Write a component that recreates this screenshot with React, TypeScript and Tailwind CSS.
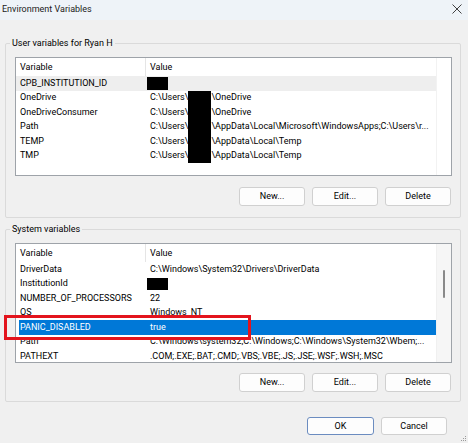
import React from 'react';
import clsx from 'clsx';

type Row = {
  name: string;
  value: React.ReactNode;
  hover?: boolean;
  selected?: boolean;
};

// redaction blocks from the screenshot
function Blot({ className }: { className?: string }) {
  return <span className={clsx('inline-block bg-black', className)} />;
}

function UserPath({ rest }: { rest: string }) {
  return (
    <>
      <span>C:\Users\</span>
      <Blot className="h-full w-[23px]" />
      <span>{rest}</span>
    </>
  );
}

const userRows: Row[] = [
  { name: 'CPB_INSTITUTION_ID', value: <Blot className="-ml-[3px] h-[13px] w-[21px]" />, hover: true },
  { name: 'OneDrive', value: <UserPath rest="\OneDrive" /> },
  { name: 'OneDriveConsumer', value: <UserPath rest="\OneDrive" /> },
  { name: 'Path', value: <UserPath rest="\AppData\Local\Microsoft\WindowsApps;C:\Users\r..." /> },
  { name: 'TEMP', value: <UserPath rest="\AppData\Local\Temp" /> },
  { name: 'TMP', value: <UserPath rest="\AppData\Local\Temp" /> },
];

const systemRows: Row[] = [
  { name: 'DriverData', value: 'C:\\Windows\\System32\\Drivers\\DriverData' },
  { name: 'InstitutionId', value: <Blot className="-ml-[3px] h-[12px] w-[21px]" /> },
  { name: 'NUMBER_OF_PROCESSORS', value: '22' },
  { name: 'OS', value: 'Windows_NT' },
  { name: 'PANIC_DISABLED', value: 'true', selected: true },
  { name: 'Path', value: 'C:\\Windows\\system32;C:\\Windows;C:\\Windows\\System32\\Wbem;...' },
  { name: 'PATHEXT', value: '.COM;.EXE;.BAT;.CMD;.VBS;.VBE;.JS;.JSE;.WSF;.WSH;.MSC' },
];

function ListRow({ row }: { row: Row }) {
  return (
    <div
      className={clsx(
        'flex h-[14.5px] shrink-0 whitespace-nowrap',
        row.selected && 'ml-[3px] bg-[#0078d7] text-white',
        row.hover && 'bg-[#eeeeee]'
      )}
    >
      <div className={clsx('flex shrink-0 items-center', row.selected ? 'w-[127px] pl-[1px]' : 'w-[130px] pl-[4px]')}>
        {row.name}
      </div>
      <div className="flex h-full flex-1 items-center overflow-hidden pl-[4px]">{row.value}</div>
    </div>
  );
}

function ListView({ rows, height, scroll }: { rows: Row[]; height: string; scroll?: boolean }) {
  return (
    <div className={clsx('flex overflow-hidden border border-[#9ea3a9] bg-white', height)}>
      <div className="flex w-[420px] flex-col overflow-hidden">
        <div className="flex h-[18px] shrink-0 items-center">
          <div className="flex h-full w-[130px] items-center border-r border-[#e5e5e5] pl-[4px]">Variable</div>
          <div className="pl-[4px]">Value</div>
        </div>
        {rows.map((r) => (
          <ListRow key={r.name} row={r} />
        ))}
      </div>
      <div
        className={clsx(
          'flex flex-1 justify-center border-l',
          scroll ? 'border-[#f0f0f0] bg-[#f6f6f6] pt-[26px]' : 'border-[#f2f2f2] bg-white'
        )}
      >
        {scroll && <div className="h-[28px] w-[2px] rounded-full bg-[#8a8a8a]" />}
      </div>
    </div>
  );
}

function Button({ children, className }: { children: React.ReactNode; className?: string }) {
  return (
    <div
      className={clsx(
        'flex w-[66px] items-center justify-center rounded-[3px] border bg-[#fdfdfd]',
        className ?? 'border-[#d0d0d0]'
      )}
    >
      {children}
    </div>
  );
}

function GroupBox({
  label,
  className,
  children,
}: {
  label: string;
  className?: string;
  children: React.ReactNode;
}) {
  return (
    <div className={clsx('relative flex flex-col rounded-[2px] border border-[#dadada] pl-[9px] pr-[8px] pt-[13px]', className)}>
      <span className="absolute left-[4px] top-[-7px] bg-[#f0f0f0] px-[2px] leading-[12px]">{label}</span>
      {children}
    </div>
  );
}

function ButtonRow({ className }: { className?: string }) {
  return (
    <div className={clsx('flex h-[19px] justify-end gap-[7px] pr-[1px]', className)}>
      <Button>New...</Button>
      <Button>Edit...</Button>
      <Button>Delete</Button>
    </div>
  );
}

export default function App() {
  return (
    <div className="relative flex h-[443px] w-[468px] flex-col overflow-hidden bg-[#f0f0f0] font-[family-name:Roboto,sans-serif] text-[9px] leading-none text-black">
      {/* title bar */}
      <div className="flex h-[20px] shrink-0 items-center justify-between bg-[#eef3f8] pb-[1px] pl-[2px] pr-[6px]">
        <span className="text-[#1b1b1b]">Environment Variables</span>
        <svg width="10" height="10" viewBox="0 0 10 10" className="mb-[2px]">
          <path d="M0.5 0.5 L9.5 9.5 M9.5 0.5 L0.5 9.5" stroke="#2b2b2b" strokeWidth="0.9" fill="none" />
        </svg>
      </div>

      <div className="flex flex-col pl-[5px] pr-[7px]">
        <GroupBox label="User variables for Ryan H" className="mt-[23px] pb-[11px]">
          <ListView rows={userRows} height="h-[119px]" />
          <ButtonRow className="mt-[11px]" />
        </GroupBox>

        <GroupBox label="System variables" className="mt-[11px] pb-[9px]">
          <ListView rows={systemRows} height="h-[120px]" scroll />
          <ButtonRow className="mt-[10px]" />
        </GroupBox>

        <div className="mt-[15px] flex h-[18px] justify-end gap-[7px] pr-[14px]">
          <Button className="w-[67px] border-[#6b8cc0]">OK</Button>
          <Button>Cancel</Button>
        </div>
      </div>

      {/* annotation around the selected row */}
      <div className="absolute left-[4px] top-[315px] h-[25px] w-[247px] border-[3px] border-[#e3141d]" />

      {/* size grip */}
      <svg width="6" height="6" viewBox="0 0 6 6" className="absolute bottom-[1px] right-[1px]">
        <rect x="4" y="0" width="1" height="1" fill="#9a9a9a" />
        <rect x="2" y="2" width="1" height="1" fill="#9a9a9a" />
        <rect x="4" y="2" width="1" height="1" fill="#9a9a9a" />
        <rect x="0" y="4" width="1" height="1" fill="#9a9a9a" />
        <rect x="2" y="4" width="1" height="1" fill="#9a9a9a" />
        <rect x="4" y="4" width="1" height="1" fill="#9a9a9a" />
      </svg>
    </div>
  );
}
